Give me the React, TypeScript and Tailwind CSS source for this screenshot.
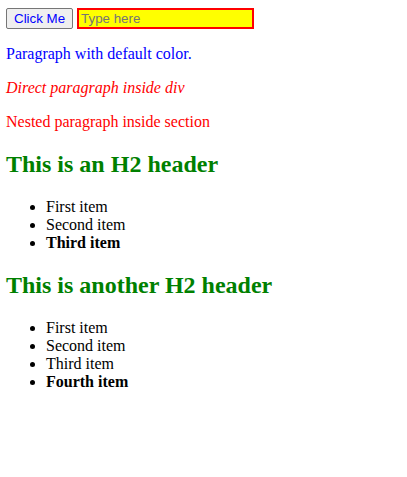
import React from 'react';

const App: React.FC = () => {
    return (
        <div className="py-2 pl-[6px] pr-2 font-['Liberation_Serif',serif] text-base leading-[normal] text-black bg-white min-h-[477px]">
            <div className="flex items-start gap-1 h-[21px]">
                <button className="h-[21px] px-[7px] border border-[#767676] rounded-[2px] bg-[#efefef] text-[#0000ff] font-['Liberation_Sans',sans-serif] text-[13.33px] leading-[normal]">
                    Click Me
                </button>
                <input
                    type="text"
                    placeholder="Type here"
                    className="w-[177px] h-[21px] px-[2px] border-2 border-[#ff0000] bg-[#ffff00] font-['Liberation_Sans',sans-serif] text-[13.33px] leading-[normal] placeholder:text-[#757575] outline-none"
                />
            </div>
            <p className="my-4 text-[#0000ff]">Paragraph with default color.</p>
            <p className="my-4 text-[#ff0000] italic">Direct paragraph inside div</p>
            <section>
                <p className="my-4 text-[#ff0000]">Nested paragraph inside section</p>
            </section>
            <h2 className="my-[19.92px] text-2xl leading-[normal] font-bold text-[#008000]">This is an H2 header</h2>
            <ul className="my-4 pl-10 list-disc">
                <li>First item</li>
                <li>Second item</li>
                <li className="font-bold">Third item</li>
            </ul>
            <h2 className="my-[19.92px] text-2xl leading-[normal] font-bold text-[#008000]">This is another H2 header</h2>
            <ul className="my-4 pl-10 list-disc">
                <li>First item</li>
                <li>Second item</li>
                <li>Third item</li>
                <li className="font-bold">Fourth item</li>
            </ul>
        </div>
    );
};

export default App;
